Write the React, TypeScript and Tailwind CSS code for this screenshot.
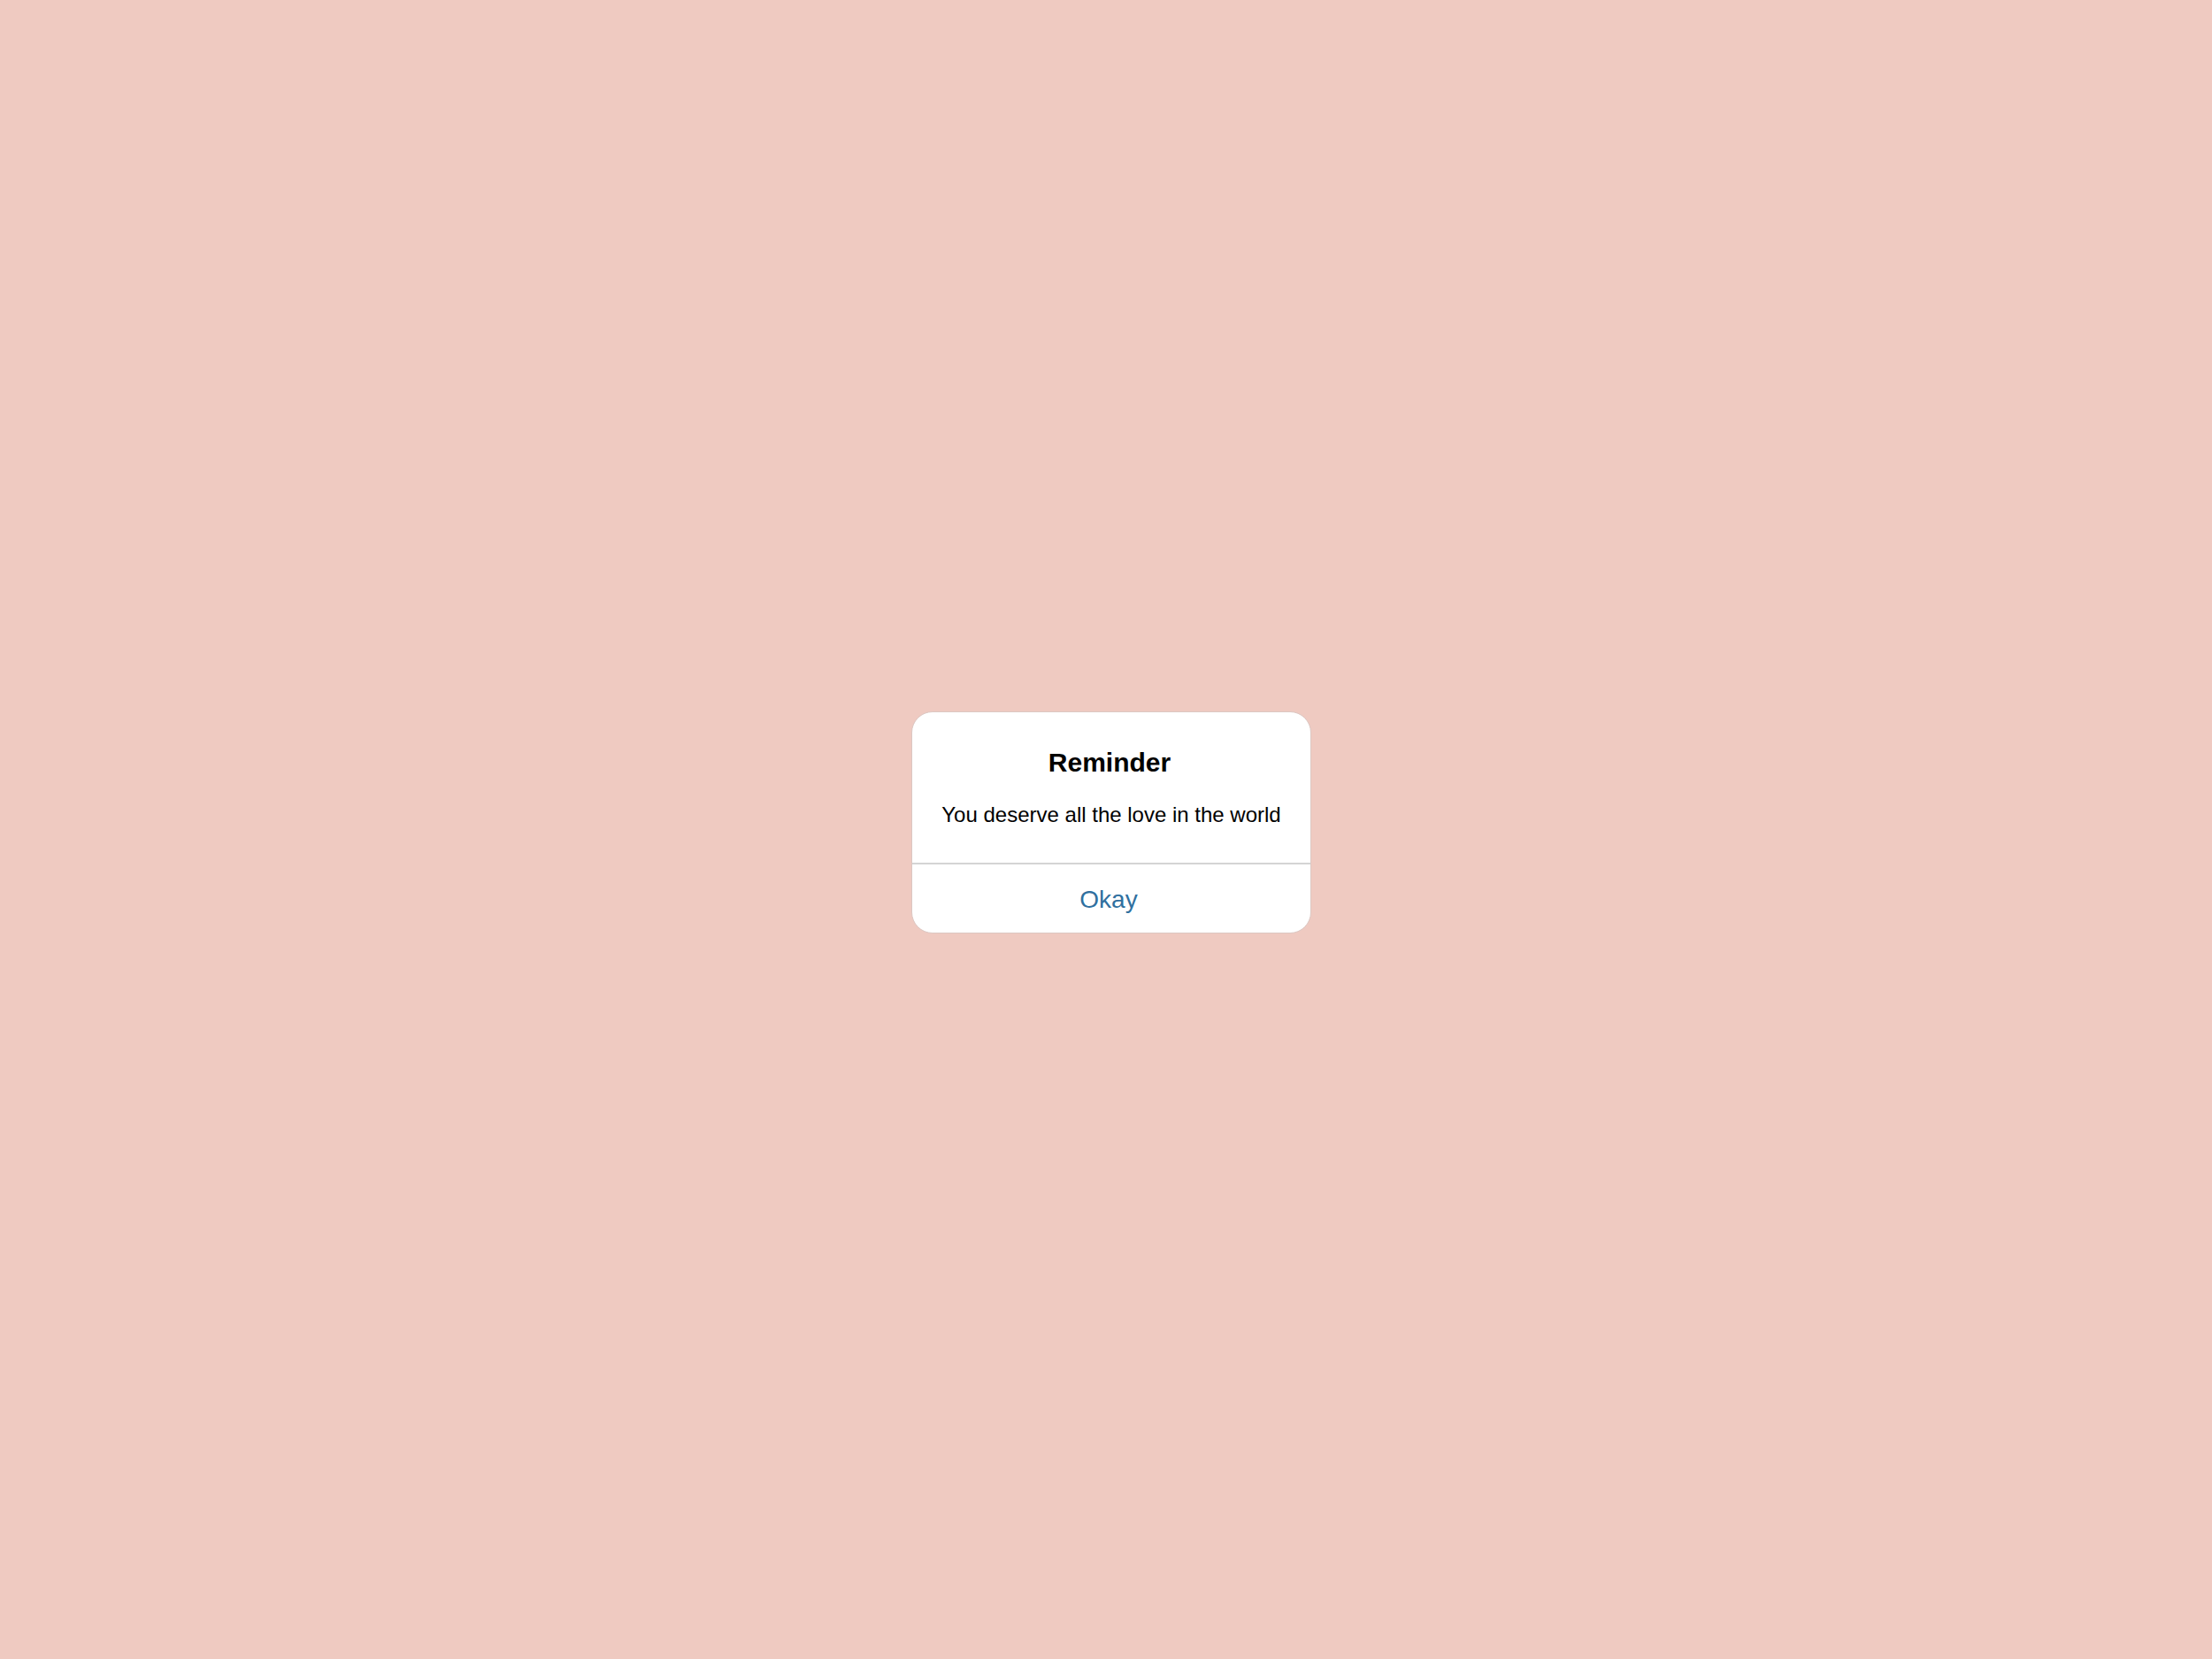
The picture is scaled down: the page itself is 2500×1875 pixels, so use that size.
import React from 'react';

function AlertDialog({ title, message, action }: { title: string; message: string; action: string }) {
  return (
    <div className="w-[452px] bg-white rounded-[24px] border border-[#dcc7c2] overflow-hidden">
      <div className="flex flex-col items-center pt-[39px] pb-[40px] px-6">
        <h2 className="mr-[4px] text-[30px] leading-[36px] font-bold text-black">{title}</h2>
        <p className="mt-[26px] text-[24px] leading-[29px] text-black">{message}</p>
      </div>
      <div className="h-[2px] bg-[#d4d4d4]" />
      <button className="w-full h-[77px] flex items-center justify-center pt-[3px] pr-[6px] text-[28px] leading-[34px] text-[#30709f]">
        {action}
      </button>
    </div>
  );
}

export default function App() {
  return (
    <div
      className="min-h-screen w-full bg-[#efcac1] flex items-center justify-center pl-[12px] pb-[16px]"
      style={{ fontFamily: '"Liberation Sans", Arial, sans-serif' }}
    >
      <AlertDialog title="Reminder" message="You deserve all the love in the world" action="Okay" />
    </div>
  );
}
